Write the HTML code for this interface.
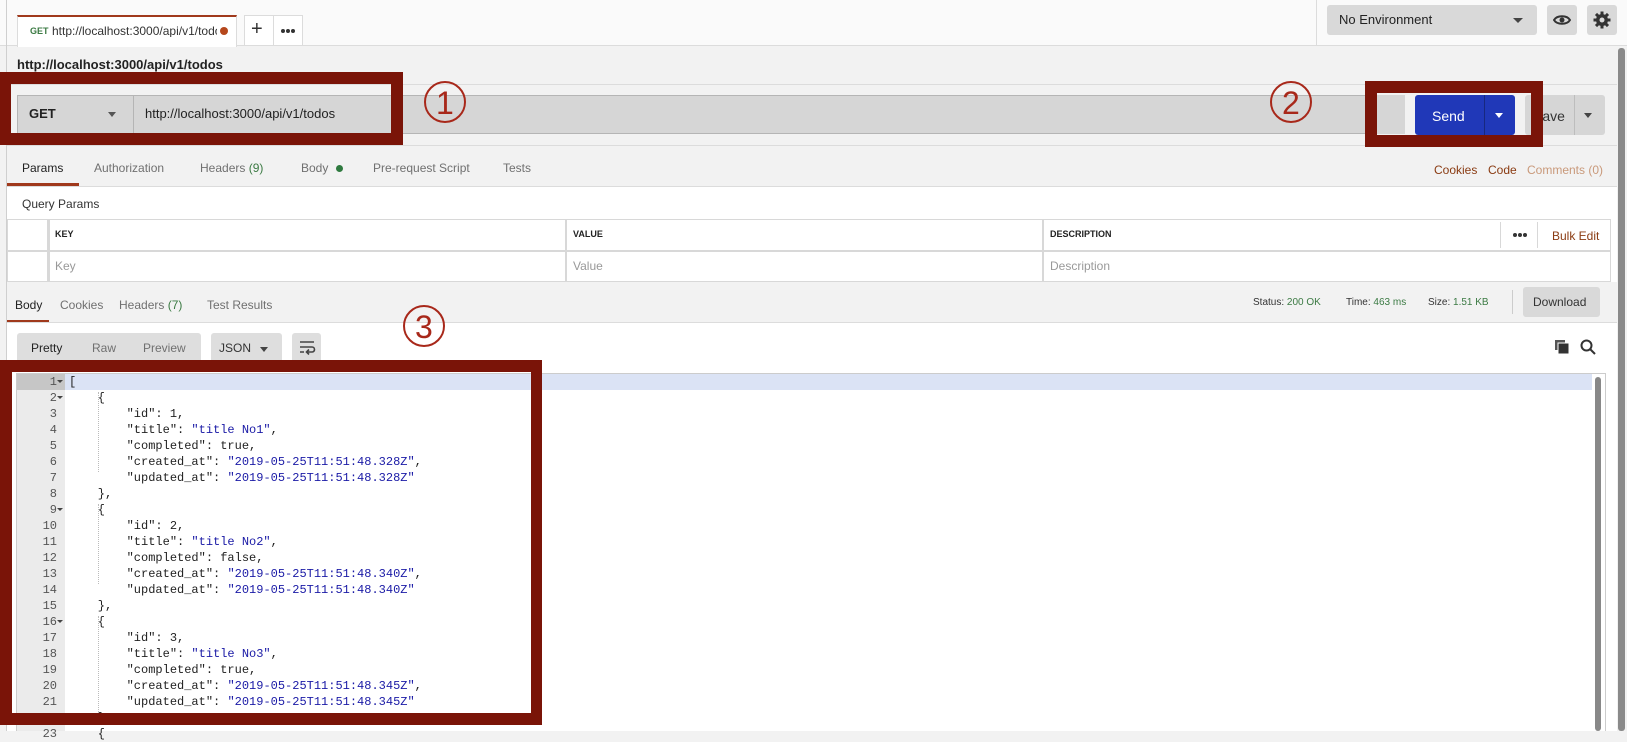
<!DOCTYPE html>
<html><head><meta charset="utf-8">
<style>
*{box-sizing:border-box;margin:0;padding:0}
body{width:1627px;height:731px;overflow:hidden;background:#f2f2f2;font-family:"Liberation Sans",sans-serif;font-size:12px;color:#505050;position:relative}
.a{position:absolute}
.t{position:absolute;white-space:nowrap;line-height:1}
.mono{font-family:"Liberation Mono",monospace;font-size:12px;color:#222}
.s{color:#1a1aa6}
.dot{position:absolute;width:4px;height:4px;border-radius:50%;background:#333}
</style></head><body>
<div class="a" style="left:0;top:0;width:1627px;height:46px;background:#fafafa;border-bottom:1px solid #dcdcdc"></div>
<div class="a" style="left:6px;top:0;width:1px;height:731px;background:#cfcfcf"></div>
<div class="a" style="left:17px;top:15px;width:220px;height:32px;background:#fff;border:1px solid #dcdcdc;border-top:2px solid #a0391c;border-bottom:none"></div>
<div class="t" style="left:30px;top:27px;font-size:9px;font-weight:bold;color:#3b7a43">GET</div>
<div class="t" style="left:52px;top:25px;font-size:12px;color:#333;width:165px;overflow:hidden">http://localhost:3000/api/v1/todos</div>
<div class="a" style="left:220px;top:27px;width:8px;height:8px;border-radius:50%;background:#b5471c"></div>
<div class="a" style="left:244px;top:15px;width:59px;height:31px;background:#fff;border:1px solid #dcdcdc"></div>
<div class="a" style="left:273px;top:15px;width:1px;height:31px;background:#dcdcdc"></div>
<div class="t" style="left:251px;top:19px;font-size:20px;color:#333">+</div>
<div class="dot" style="left:281px;top:29px"></div><div class="dot" style="left:286px;top:29px"></div><div class="dot" style="left:291px;top:29px"></div>
<div class="a" style="left:1316px;top:0;width:1px;height:45px;background:#dcdcdc"></div>
<div class="a" style="left:1327px;top:5px;width:210px;height:30px;background:#d9d9d9;border-radius:3px"></div>
<div class="t" style="left:1339px;top:13px;font-size:13px;color:#222">No Environment</div>
<div class="a" style="left:1513px;top:18px;border-left:5px solid transparent;border-right:5px solid transparent;border-top:5px solid #444"></div>
<div class="a" style="left:1547px;top:5px;width:30px;height:30px;background:#d9d9d9;border-radius:3px"></div>
<svg class="a" style="left:1553px;top:12px" width="18" height="16" viewBox="0 0 18 16"><path d="M1 8C4 3 14 3 17 8C14 13 4 13 1 8Z" fill="none" stroke="#333" stroke-width="2"/><circle cx="9" cy="8" r="2.5" fill="#333"/></svg>
<div class="a" style="left:1587px;top:5px;width:30px;height:30px;background:#d9d9d9;border-radius:3px"></div>
<svg class="a" style="left:1593px;top:11px" width="18" height="18" viewBox="0 0 18 18"><g fill="#333"><circle cx="9" cy="9" r="6"/><rect x="7.5" y="0.5" width="3" height="17"/><rect x="0.5" y="7.5" width="17" height="3"/><rect x="7.5" y="0.5" width="3" height="17" transform="rotate(45 9 9)"/><rect x="7.5" y="0.5" width="3" height="17" transform="rotate(-45 9 9)"/></g><circle cx="9" cy="9" r="2.5" fill="#d9d9d9"/></svg>

<div class="t" style="left:17px;top:58px;font-size:13px;font-weight:bold;color:#222">http://localhost:3000/api/v1/todos</div>
<div class="a" style="left:7px;top:84px;width:1610px;height:1px;background:#dcdcdc"></div>
<div class="a" style="left:17px;top:95px;width:1360px;height:39px;background:#d6d6d6;border:1px solid #b5b5b5"></div>
<div class="a" style="left:133px;top:95px;width:1px;height:39px;background:#b5b5b5"></div>
<div class="t" style="left:29px;top:107px;font-size:13px;font-weight:bold;color:#222">GET</div>
<div class="a" style="left:108px;top:112px;border-left:4px solid transparent;border-right:4px solid transparent;border-top:5px solid #555"></div>
<div class="t" style="left:145px;top:107px;font-size:13px;color:#222">http://localhost:3000/api/v1/todos</div>
<div class="a" style="left:1377px;top:95px;width:28px;height:39px;background:#d6d6d6"></div>
<div class="a" style="left:1525px;top:95px;width:80px;height:40px;background:#d6d6d6;border-radius:3px"></div>
<div class="a" style="left:1574px;top:95px;width:1px;height:40px;background:#bdbdbd"></div>
<div class="t" style="left:1533px;top:109px;font-size:14px;color:#333">Save</div>
<div class="a" style="left:1584px;top:113px;border-left:4px solid transparent;border-right:4px solid transparent;border-top:5px solid #444"></div>
<div class="a" style="left:1415px;top:95px;width:100px;height:40px;background:#2038b8;border-radius:3px"></div>
<div class="a" style="left:1484px;top:95px;width:1px;height:40px;background:#17287f"></div>
<div class="t" style="left:1432px;top:109px;font-size:14px;color:#fff">Send</div>
<div class="a" style="left:1495px;top:113px;border-left:4px solid transparent;border-right:4px solid transparent;border-top:5px solid #fff"></div>
<div class="a" style="left:7px;top:145px;width:1610px;height:1px;background:#dcdcdc"></div>
<div class="t" style="left:22px;top:162px;font-size:12px;color:#222">Params</div>
<div class="a" style="left:7px;top:183px;width:72px;height:3px;background:#a0391c"></div>
<div class="t" style="left:94px;top:162px;font-size:12px;color:#707070">Authorization</div>
<div class="t" style="left:200px;top:162px;font-size:12px;color:#707070">Headers <span style="color:#3b7a43">(9)</span></div>
<div class="t" style="left:301px;top:162px;font-size:12px;color:#707070">Body</div>
<div class="a" style="left:336px;top:165px;width:7px;height:7px;border-radius:50%;background:#2f7a3f"></div>
<div class="t" style="left:373px;top:162px;font-size:12px;color:#707070">Pre-request Script</div>
<div class="t" style="left:503px;top:162px;font-size:12px;color:#707070">Tests</div>
<div class="t" style="left:1434px;top:164px;font-size:12px;color:#8a3b12">Cookies</div>
<div class="t" style="left:1488px;top:164px;font-size:12px;color:#8a3b12">Code</div>
<div class="t" style="left:1527px;top:164px;font-size:12px;color:#c9997a">Comments (0)</div>
<div class="a" style="left:7px;top:186px;width:1610px;height:96px;background:#fff;border-top:1px solid #dcdcdc"></div>
<div class="t" style="left:22px;top:198px;font-size:12px;color:#333">Query Params</div>
<div class="a" style="left:7px;top:219px;width:1604px;height:63px;border:1px solid #d8d8d8;background:#fff"></div>
<div class="a" style="left:7px;top:250px;width:1604px;height:2px;background:#d8d8d8"></div>
<div class="a" style="left:47px;top:219px;width:3px;height:63px;background:#d8d8d8"></div>
<div class="a" style="left:565px;top:219px;width:2px;height:63px;background:#d8d8d8"></div>
<div class="a" style="left:1042px;top:219px;width:2px;height:63px;background:#d8d8d8"></div>
<div class="a" style="left:1500px;top:222px;width:1px;height:26px;background:#d8d8d8"></div>
<div class="a" style="left:1537px;top:222px;width:1px;height:26px;background:#d8d8d8"></div>
<div class="t" style="left:55px;top:230px;font-size:9px;font-weight:bold;color:#222">KEY</div>
<div class="t" style="left:573px;top:230px;font-size:9px;font-weight:bold;color:#222">VALUE</div>
<div class="t" style="left:1050px;top:230px;font-size:9px;font-weight:bold;color:#222">DESCRIPTION</div>
<div class="dot" style="left:1513px;top:233px"></div><div class="dot" style="left:1518px;top:233px"></div><div class="dot" style="left:1523px;top:233px"></div>
<div class="t" style="left:1552px;top:230px;font-size:12px;color:#8a3b12">Bulk Edit</div>
<div class="t" style="left:55px;top:260px;font-size:12px;color:#999">Key</div>
<div class="t" style="left:573px;top:260px;font-size:12px;color:#999">Value</div>
<div class="t" style="left:1050px;top:260px;font-size:12px;color:#999">Description</div>
<div class="t" style="left:15px;top:299px;font-size:12px;color:#222">Body</div>
<div class="t" style="left:60px;top:299px;font-size:12px;color:#707070">Cookies</div>
<div class="t" style="left:119px;top:299px;font-size:12px;color:#707070">Headers <span style="color:#3b7a43">(7)</span></div>
<div class="t" style="left:207px;top:299px;font-size:12px;color:#707070">Test Results</div>
<div class="a" style="left:7px;top:320px;width:42px;height:3px;background:#a0391c"></div>
<div class="t" style="left:1253px;top:298px;font-size:10px;color:#333">Status: <span style="color:#3b7a43">200 OK</span></div>
<div class="t" style="left:1346px;top:298px;font-size:10px;color:#333">Time: <span style="color:#3b7a43">463 ms</span></div>
<div class="t" style="left:1428px;top:298px;font-size:10px;color:#333">Size: <span style="color:#3b7a43">1.51 KB</span></div>
<div class="a" style="left:1512px;top:290px;width:1px;height:24px;background:#ccc"></div>
<div class="a" style="left:1523px;top:287px;width:77px;height:30px;background:#d9d9d9;border-radius:3px"></div>
<div class="t" style="left:1533px;top:296px;font-size:12px;color:#333">Download</div>
<div class="a" style="left:7px;top:322px;width:1610px;height:409px;background:#fff;border-top:1px solid #dcdcdc"></div>
<div class="a" style="left:17px;top:333px;width:184px;height:28px;background:#dedede;border-radius:3px 3px 0 0"></div>
<div class="t" style="left:31px;top:342px;font-size:12px;color:#222">Pretty</div>
<div class="t" style="left:92px;top:342px;font-size:12px;color:#707070">Raw</div>
<div class="t" style="left:143px;top:342px;font-size:12px;color:#707070">Preview</div>
<div class="a" style="left:211px;top:333px;width:71px;height:28px;background:#dedede;border-radius:3px 3px 0 0"></div>
<div class="t" style="left:219px;top:342px;font-size:12px;color:#333">JSON</div>
<div class="a" style="left:260px;top:347px;border-left:4px solid transparent;border-right:4px solid transparent;border-top:5px solid #444"></div>
<div class="a" style="left:292px;top:333px;width:29px;height:28px;background:#dedede;border-radius:3px 3px 0 0"></div>
<svg class="a" style="left:298px;top:339px" width="18" height="16" viewBox="0 0 18 16"><path d="M2 3H16M2 8H14a2.5 2.5 0 0 1 0 5H9M11 10.5L8.5 13L11 15.5M2 13H6" fill="none" stroke="#444" stroke-width="1.6"/></svg>
<svg class="a" style="left:1555px;top:340px" width="14" height="14" viewBox="0 0 14 14"><rect x="0" y="0" width="10" height="10" fill="#555"/><rect x="3" y="3" width="11" height="11" fill="#333" stroke="#fff" stroke-width="1"/></svg>
<svg class="a" style="left:1580px;top:339px" width="16" height="16" viewBox="0 0 16 16"><circle cx="6.5" cy="6.5" r="5" fill="none" stroke="#333" stroke-width="2"/><path d="M10 10L15 15" stroke="#333" stroke-width="2"/></svg>
<div class="a" style="left:16px;top:373px;width:1590px;height:358px;border:1px solid #ccc;border-bottom:none;background:#fff"></div>
<div class="a" style="left:17px;top:374px;width:48px;height:357px;background:#ebebeb"></div>
<div class="a" style="left:65px;top:374px;width:1527px;height:16px;background:#dbe3f5"></div>
<div class="a" style="left:17px;top:374px;width:48px;height:16px;background:#c6c6c6"></div>
<div class="a" style="left:1595px;top:377px;width:6px;height:354px;background:#888;border-radius:3px"></div>
<div class="a" style="left:1618px;top:48px;width:7px;height:683px;background:#8a8a8a;border-radius:3px"></div>
<div class="a" style="left:98px;top:392px;width:0;height:80px;border-left:1px dotted #bbb"></div>
<div class="a" style="left:98px;top:504px;width:0;height:80px;border-left:1px dotted #bbb"></div>
<div class="a" style="left:98px;top:616px;width:0;height:100px;border-left:1px dotted #bbb"></div>
<div class="a mono" style="left:17px;top:374px;width:40px;text-align:right;line-height:16px;color:#555">1<br>2<br>3<br>4<br>5<br>6<br>7<br>8<br>9<br>10<br>11<br>12<br>13<br>14<br>15<br>16<br>17<br>18<br>19<br>20<br>21<br>22<br>23</div>
<div class="a" style="left:57px;top:380px;border-left:3px solid transparent;border-right:3px solid transparent;border-top:3px solid #444"></div>
<div class="a" style="left:57px;top:396px;border-left:3px solid transparent;border-right:3px solid transparent;border-top:3px solid #444"></div>
<div class="a" style="left:57px;top:508px;border-left:3px solid transparent;border-right:3px solid transparent;border-top:3px solid #444"></div>
<div class="a" style="left:57px;top:620px;border-left:3px solid transparent;border-right:3px solid transparent;border-top:3px solid #444"></div>
<pre class="a mono" style="left:69px;top:374px;line-height:16px">[
    {
        "id": 1,
        "title": <span class="s">"title No1"</span>,
        "completed": true,
        "created_at": <span class="s">"2019-05-25T11:51:48.328Z"</span>,
        "updated_at": <span class="s">"2019-05-25T11:51:48.328Z"</span>
    },
    {
        "id": 2,
        "title": <span class="s">"title No2"</span>,
        "completed": false,
        "created_at": <span class="s">"2019-05-25T11:51:48.340Z"</span>,
        "updated_at": <span class="s">"2019-05-25T11:51:48.340Z"</span>
    },
    {
        "id": 3,
        "title": <span class="s">"title No3"</span>,
        "completed": true,
        "created_at": <span class="s">"2019-05-25T11:51:48.345Z"</span>,
        "updated_at": <span class="s">"2019-05-25T11:51:48.345Z"</span>
    },
    {</pre>
<div class="a" style="left:0;top:72px;width:403px;height:73px;border:12px solid #7a1408;border-left-width:11px"></div>
<div class="a" style="left:1365px;top:81px;width:178px;height:66px;border:12px solid #7a1408"></div>
<div class="a" style="left:0;top:360px;width:542px;height:365px;border:12px solid #7a1408;border-right-width:11px"></div>
<div class="a" style="left:424px;top:81px;width:42px;height:42px;border:2px solid #a8281a;border-radius:50%"></div>
<div class="t" style="left:436px;top:87px;font-size:32px;color:#a8281a">1</div>
<div class="a" style="left:1270px;top:81px;width:42px;height:42px;border:2px solid #a8281a;border-radius:50%"></div>
<div class="t" style="left:1282px;top:87px;font-size:32px;color:#a8281a">2</div>
<div class="a" style="left:403px;top:305px;width:42px;height:42px;border:2px solid #a8281a;border-radius:50%"></div>
<div class="t" style="left:415px;top:311px;font-size:32px;color:#a8281a">3</div>
</body></html>
